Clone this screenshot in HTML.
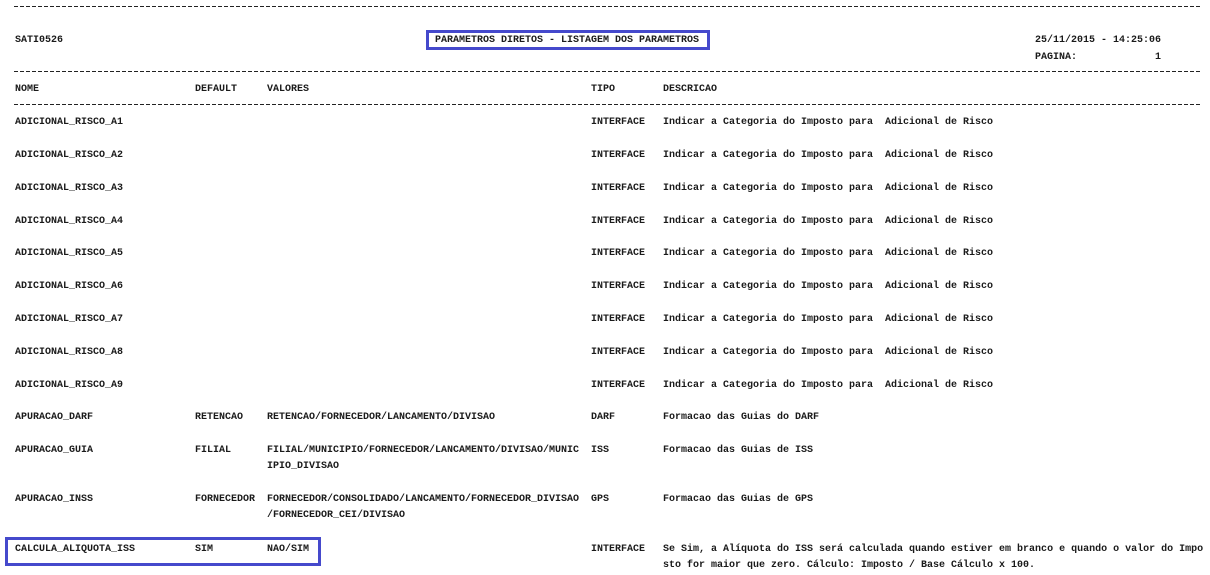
<!DOCTYPE html>
<html><head><meta charset="utf-8"><style>
body{margin:0;width:1210px;height:575px;background:#fff;position:relative;overflow:hidden;font-family:"Liberation Mono",monospace;font-size:10px;font-weight:bold;color:#1a1a1a}
.w{position:absolute;left:0;top:2px;width:1210px;height:573px}
.t{position:absolute;white-space:pre;line-height:14px}
.d{position:absolute;left:14px;width:1188px;height:1px;background:repeating-linear-gradient(90deg,#222 0 4px,transparent 4px 6px)}
.box{position:absolute;border:3px solid #4549cc;box-sizing:border-box}
</style></head><body>
<div class="d" style="top:6px"></div>
<div class="d" style="top:71px"></div>
<div class="d" style="top:104px"></div>
<div class="box" style="left:426px;top:30px;width:284px;height:20px"></div>
<div class="box" style="left:5px;top:537px;width:316px;height:29px"></div>
<div class="w">
<div class="t" style="left:15px;top:32px">SATI0526</div>
<div class="t" style="left:435px;top:32px">PARAMETROS DIRETOS - LISTAGEM DOS PARAMETROS</div>
<div class="t" style="left:1035px;top:32px">25/11/2015 - 14:25:06</div>
<div class="t" style="left:1035px;top:49px">PAGINA:</div>
<div class="t" style="left:1155px;top:49px">1</div>
<div class="t" style="left:15px;top:81px">NOME</div>
<div class="t" style="left:195px;top:81px">DEFAULT</div>
<div class="t" style="left:267px;top:81px">VALORES</div>
<div class="t" style="left:591px;top:81px">TIPO</div>
<div class="t" style="left:663px;top:81px">DESCRICAO</div>

<div class="t" style="left:15px;top:114px">ADICIONAL_RISCO_A1</div><div class="t" style="left:591px;top:114px">INTERFACE</div><div class="t" style="left:663px;top:114px">Indicar a Categoria do Imposto para  Adicional de Risco</div>
<div class="t" style="left:15px;top:147px">ADICIONAL_RISCO_A2</div><div class="t" style="left:591px;top:147px">INTERFACE</div><div class="t" style="left:663px;top:147px">Indicar a Categoria do Imposto para  Adicional de Risco</div>
<div class="t" style="left:15px;top:180px">ADICIONAL_RISCO_A3</div><div class="t" style="left:591px;top:180px">INTERFACE</div><div class="t" style="left:663px;top:180px">Indicar a Categoria do Imposto para  Adicional de Risco</div>
<div class="t" style="left:15px;top:213px">ADICIONAL_RISCO_A4</div><div class="t" style="left:591px;top:213px">INTERFACE</div><div class="t" style="left:663px;top:213px">Indicar a Categoria do Imposto para  Adicional de Risco</div>
<div class="t" style="left:15px;top:245px">ADICIONAL_RISCO_A5</div><div class="t" style="left:591px;top:245px">INTERFACE</div><div class="t" style="left:663px;top:245px">Indicar a Categoria do Imposto para  Adicional de Risco</div>
<div class="t" style="left:15px;top:278px">ADICIONAL_RISCO_A6</div><div class="t" style="left:591px;top:278px">INTERFACE</div><div class="t" style="left:663px;top:278px">Indicar a Categoria do Imposto para  Adicional de Risco</div>
<div class="t" style="left:15px;top:311px">ADICIONAL_RISCO_A7</div><div class="t" style="left:591px;top:311px">INTERFACE</div><div class="t" style="left:663px;top:311px">Indicar a Categoria do Imposto para  Adicional de Risco</div>
<div class="t" style="left:15px;top:344px">ADICIONAL_RISCO_A8</div><div class="t" style="left:591px;top:344px">INTERFACE</div><div class="t" style="left:663px;top:344px">Indicar a Categoria do Imposto para  Adicional de Risco</div>
<div class="t" style="left:15px;top:377px">ADICIONAL_RISCO_A9</div><div class="t" style="left:591px;top:377px">INTERFACE</div><div class="t" style="left:663px;top:377px">Indicar a Categoria do Imposto para  Adicional de Risco</div>

<div class="t" style="left:15px;top:409px">APURACAO_DARF</div><div class="t" style="left:195px;top:409px">RETENCAO</div><div class="t" style="left:267px;top:409px">RETENCAO/FORNECEDOR/LANCAMENTO/DIVISAO</div><div class="t" style="left:591px;top:409px">DARF</div><div class="t" style="left:663px;top:409px">Formacao das Guias do DARF</div>
<div class="t" style="left:15px;top:442px">APURACAO_GUIA</div><div class="t" style="left:195px;top:442px">FILIAL</div><div class="t" style="left:267px;top:441px;line-height:16px">FILIAL/MUNICIPIO/FORNECEDOR/LANCAMENTO/DIVISAO/MUNIC
IPIO_DIVISAO</div><div class="t" style="left:591px;top:442px">ISS</div><div class="t" style="left:663px;top:442px">Formacao das Guias de ISS</div>
<div class="t" style="left:15px;top:491px">APURACAO_INSS</div><div class="t" style="left:195px;top:491px">FORNECEDOR</div><div class="t" style="left:267px;top:490px;line-height:16px">FORNECEDOR/CONSOLIDADO/LANCAMENTO/FORNECEDOR_DIVISAO
/FORNECEDOR_CEI/DIVISAO</div><div class="t" style="left:591px;top:491px">GPS</div><div class="t" style="left:663px;top:491px">Formacao das Guias de GPS</div>
<div class="t" style="left:15px;top:541px">CALCULA_ALIQUOTA_ISS</div><div class="t" style="left:195px;top:541px">SIM</div><div class="t" style="left:267px;top:541px">NAO/SIM</div><div class="t" style="left:591px;top:541px">INTERFACE</div><div class="t" style="left:663px;top:540px;line-height:16px">Se Sim, a Alíquota do ISS será calculada quando estiver em branco e quando o valor do Impo
sto for maior que zero. Cálculo: Imposto / Base Cálculo x 100.</div>
</div>
</body></html>
